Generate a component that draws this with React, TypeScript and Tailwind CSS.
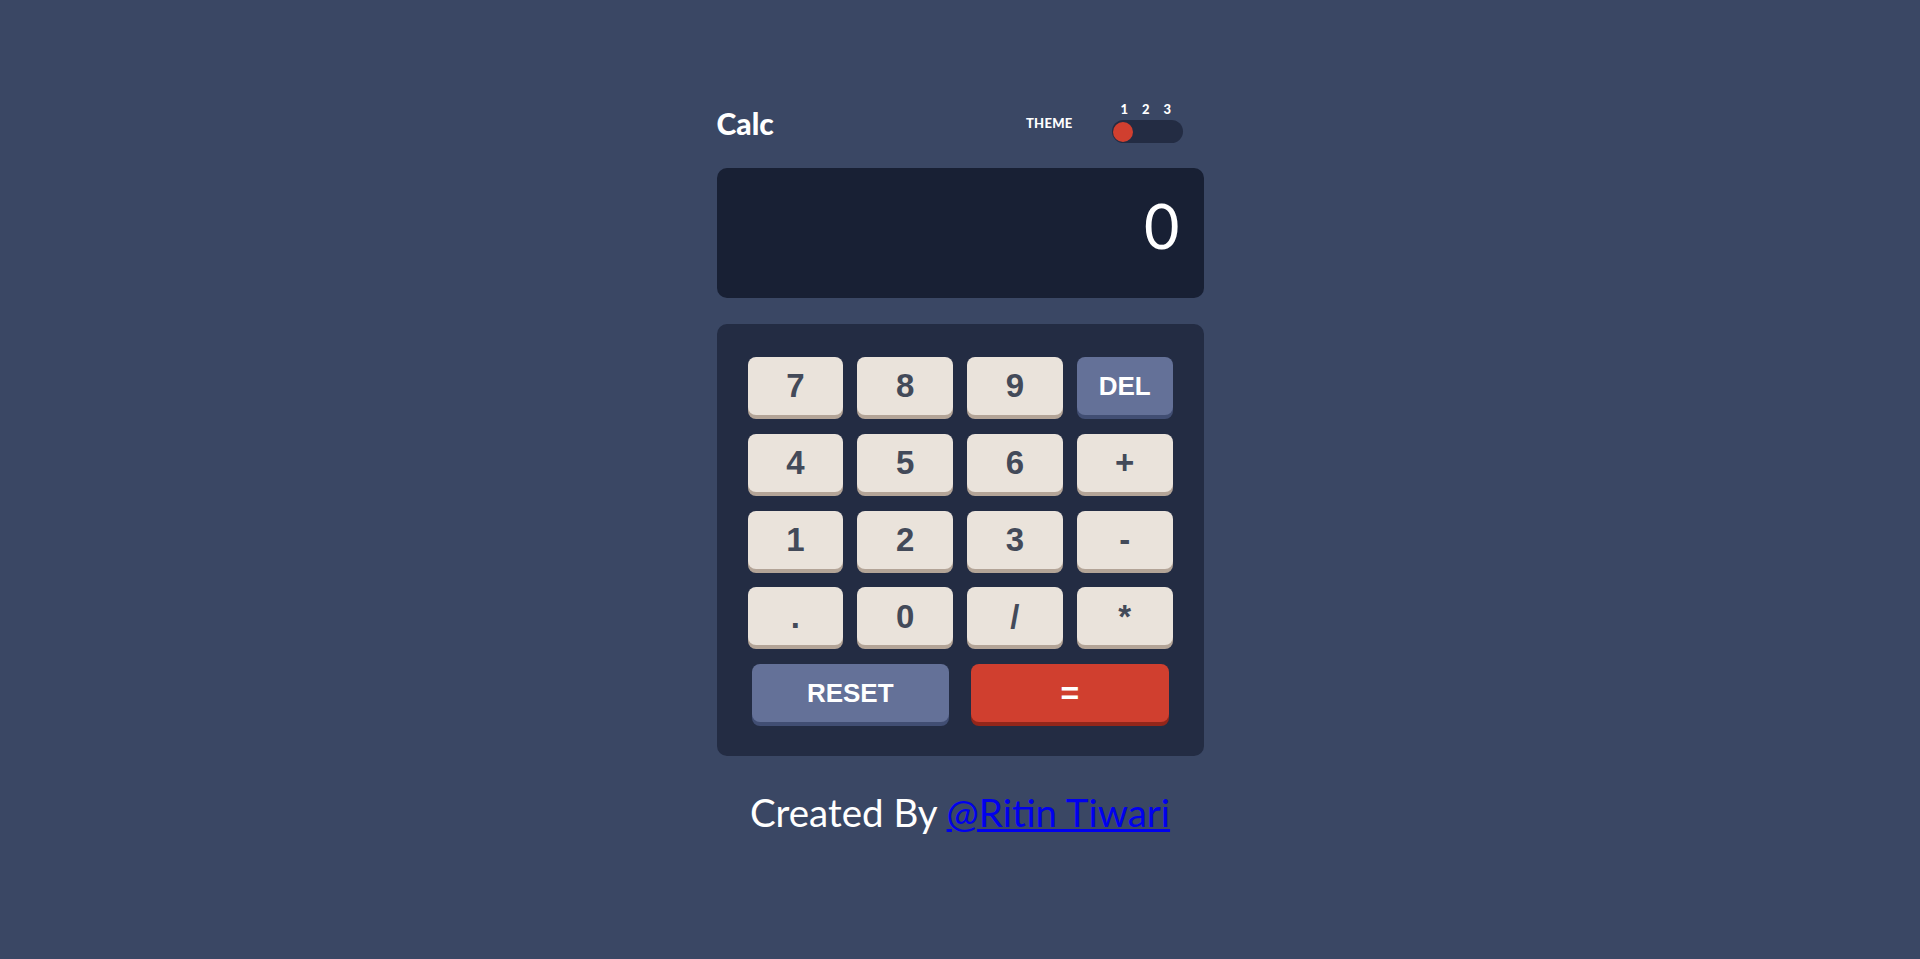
const keys = ["7", "8", "9", "DEL", "4", "5", "6", "+", "1", "2", "3", "-", ".", "0", "/", "*"];

const Key = ({ label }: { label: string }) => {
  const isDel = label === "DEL";
  return (
    <button
      className={
        isDel
          ? "h-[58px] rounded-[8px] bg-[#647198] text-white text-[26px] font-bold shadow-[0_4px_0_#414e73] font-['Liberation_Sans',Arial,sans-serif] cursor-pointer"
          : "h-[58px] rounded-[8px] bg-[#eae3db] text-[#434a59] text-[33px] font-bold shadow-[0_4px_0_#b3a497] font-['Liberation_Sans',Arial,sans-serif] cursor-pointer"
      }
    >
      {label}
    </button>
  );
};

const App = () => {
  return (
    <div className="min-h-screen w-full bg-[#3a4764] flex flex-col items-center pt-[103px] font-['Lato',sans-serif]">
      <div className="w-[487px] flex flex-col">
        <div className="flex flex-row items-center justify-between pr-[21px]">
          <div className="text-white text-[30px] font-black leading-none">Calc</div>
          <div className="flex flex-row items-center gap-[39px]">
            <div className="text-white text-[13px] font-black leading-none tracking-[0.02em]">THEME</div>
            <div className="flex flex-col gap-[4px]">
              <div className="flex flex-row pl-[2px] text-white text-[13px] font-black leading-none">
                <span className="w-[21.5px] text-center">1</span>
                <span className="w-[21.5px] text-center">2</span>
                <span className="w-[21.5px] text-center">3</span>
              </div>
              <div className="w-[71px] h-[23px] rounded-full bg-[#232c43] flex flex-row items-center px-[1.5px]">
                <div className="w-[20px] h-[20px] rounded-full bg-[#d03f2f]" />
              </div>
            </div>
          </div>
        </div>

        <div className="mt-[25px] h-[130px] rounded-[10px] bg-[#182034] flex flex-row items-center justify-end pr-6 pb-[15px]">
          <span className="text-white text-[61px] leading-none font-normal">0</span>
        </div>

        <div className="mt-[26px] rounded-[10px] bg-[#232c43] pt-[33px] pb-[34px] px-[31px]">
          <div className="grid grid-cols-4 gap-x-[14px] gap-y-[18.75px]">
            {keys.map((k) => (
              <Key key={k} label={k} />
            ))}
            <button className="col-span-2 mx-1 h-[58px] rounded-[8px] bg-[#647198] text-white text-[26px] font-bold shadow-[0_4px_0_#414e73] font-['Liberation_Sans',Arial,sans-serif] cursor-pointer">
              RESET
            </button>
            <button className="col-span-2 mx-1 h-[58px] rounded-[8px] bg-[#d03f2f] text-white text-[32px] font-bold shadow-[0_4px_0_#93261a] font-['Liberation_Sans',Arial,sans-serif] cursor-pointer">
              =
            </button>
          </div>
        </div>

        <p className="mt-[37px] text-center text-white text-[38.5px] leading-none">
          Created By{" "}
          <a href="#" className="text-[#0000ee] underline">
            @Ritin Tiwari
          </a>
        </p>
      </div>
    </div>
  );
};

export default App;
